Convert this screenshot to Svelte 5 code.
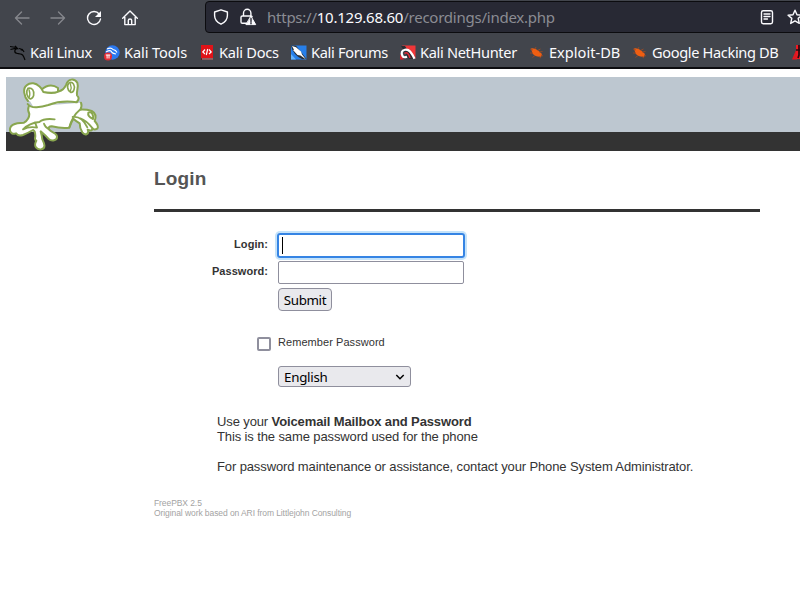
<script>
  const bookmarks = [
    { icon: 'linux', label: 'Kali Linux', w: 94, ls: -0.4 },
    { icon: 'tools', label: 'Kali Tools', w: 95, ls: -0.1 },
    { icon: 'docs', label: 'Kali Docs', w: 92, ls: -0.25 },
    { icon: 'forums', label: 'Kali Forums', w: 109, ls: -0.33 },
    { icon: 'hunter', label: 'Kali NetHunter', w: 129, ls: -0.33 },
    { icon: 'bug', label: 'Exploit-DB', w: 103, ls: 0 },
    { icon: 'bug', label: 'Google Hacking DB', w: 138, ls: -0.36 },
    { icon: 'offsec', label: '', w: 20, ls: 0 },
  ];
</script>

<div class="page">
  <div class="toolbar">
    <div class="nav">
      <svg class="dim" viewBox="0 0 16 16"><path d="M15 8H1.500M7.500 2 1.500 8l6 6" /></svg>
      <svg class="dim" viewBox="0 0 16 16"><path d="M1 8h13.500M8.500 2l6 6-6 6" /></svg>
      <svg viewBox="0 0 16 16"><path d="M13.200 4A6.500 6.500 0 1 0 14.500 9" /><path d="M15 1v6H9z" fill="#fbfbfe" stroke="none" /></svg>
      <svg viewBox="0 0 16 16"><path d="M.7 8.200 8 1l7.300 7.200M2.800 7v7.600h10.400V7M6.300 14v-3.500q0-1.500 1.700-1.500t1.700 1.500V14" /></svg>
    </div>
    <div class="url">
      <svg class="shield" viewBox="0 0 16 16"><path d="M8 .8 14.400 3v3.500c0 4-2.700 7-6.400 8.700C4.300 13.500 1.600 10.500 1.600 6.500V3z" /></svg>
      <svg class="lock" viewBox="0 0 18 18"><path d="M4.500 8V5a3.700 3.700 0 0 1 7.400 0v3M8 15.300H3.300q-1.300 0-1.300-1.300V9.300Q2 8 3.300 8h8.500q1 0 1.300.8" /><path d="m12 8.400 4.700 8.200H7.300z" fill="#fbfbfe" stroke="#fbfbfe" stroke-linejoin="round" stroke-width="1" /><path d="M12 10.500v3M12 14.600v1.200" stroke="#282934" /></svg>
      <span class="addr">https://<b>10.129.68.60</b>/recordings/index.php</span>
      <svg class="reader" viewBox="0 0 16 16"><rect x="2.500" y="1.700" width="11" height="13" rx="1.700" /><path d="M5 5h6M5 7.500h6M5 10h3.500" stroke-width="1.300" /></svg>
      <svg class="star" viewBox="0 0 16 16"><path d="m8 1.200 2 4.500 4.900.5-3.700 3.200 1.100 5L8 11.900l-4.300 2.500 1.100-5L1.100 6.200 6 5.700z" /></svg>
    </div>
  </div>

  <div class="bookmarks">
    {#each bookmarks as b}
      <div class="bm" style="width:{b.w}px;letter-spacing:{b.ls}px">
        <svg viewBox="0 0 16 16">
          {#if b.icon === 'linux'}
            <path d="M0 1.500 6.500 2.500 5 .8M.5 4.500 6.500 3.200M6 3 8.500 4M10.500 4.500 13 5.500 12 4M7.500 3.300C4 4.200 3.800 8 7.500 8.500s5 .5 6.200 3.200q.8 2 1.300 3.300M9 3.500q4 .5 5 3.500" stroke="#050505" stroke-width="1.200" fill="none" />
          {:else if b.icon === 'tools'}
            <circle cx="8.500" cy="7.500" r="7.200" fill="#2b78ef" />
            <path d="M3 4q4-2 6 .5 3 .5 4 3M2 7q5-3 6 .5 1 1 4 1.500" stroke="#fff" stroke-width="1.100" fill="none" />
            <circle cx="4" cy="11.500" r="4" fill="#e52b32" /><path d="M1.800 10h4.500M3.100 10v3.500M5 10v3.500" stroke="#fff" fill="none" />
          {:else if b.icon === 'docs'}
            <path d="M2 0h12v13.500H2z" fill="#e01318" /><path d="M2 13.300h12v1.700H2z" fill="#5d171a" /><path d="M3 14h11" stroke="#ddd" stroke-width=".7" />
            <path d="M6 4.500 3.800 7 6 9M10 4.500 12.200 7 10 9M8.700 4l-1.400 6" stroke="#fff" stroke-width="1.200" fill="none" />
          {:else if b.icon === 'forums'}
            <path d="M0 .5h15.500v14H0z" fill="#277fe9" /><path d="M0 .5 5 .8 15.500 14H11Q2 10 0 .5" fill="#2b3036" />
            <path d="m1 1 4 1.200 5 4.300 1 3 4 5-5.500-4-3-.5L2 5l1-.2z" fill="#fff" /><path d="m0 9 5 5.500H0z" fill="#65b3fb" />
          {:else if b.icon === 'hunter'}
            <path d="M2 .5h13.500v13.200z" fill="#f03638" /><path d="M1 1h4l9 13H9z" fill="#292b30" />
            <path d="m0 9 4 5.500H0z" fill="#d7232c" />
            <path d="M2.500 11Q0 6 5 4.800c4-1 6.500 2.500 9.500 9M2.500 11q1 2 4.500.8" fill="none" stroke="#fff" stroke-width="2.200" /><path d="M4.500 8.500Q8 6 10 13" stroke="#e42a34" stroke-width="1.500" fill="none" />
          {:else if b.icon === 'bug'}
            <path d="M2 3.500Q5 2.800 8.500 5l4.500 4-.8 2.700Q7 12.500 3.500 8.500z" fill="#ee5e12" />
            <path d="m4 5-3-1M4 8 1 8M6 10.500l-2.500 2M6 4l1-2M8.500 5.500l3-1.500M10 7l3.500-.5M10 11.500l2 1.500M12 10l2 1" stroke="#a34a20" stroke-width=".8" fill="none" />
          {:else}
            <path d="M4 0h6v14H4z" fill="#f01822" /><path d="M4 5 0 14.500h5" fill="#e01821" /><path d="M7 0v10l-1 3M4 5h4" stroke="#240c10" stroke-width="1.700" fill="none" />
          {/if}
        </svg>
        <span>{b.label}</span>
      </div>
    {/each}
  </div>

  <div class="banner">
    <svg class="frog" viewBox="0 0 330 270">
      <g fill="#fff" stroke="#89a64f" stroke-width="6" stroke-linecap="round" stroke-linejoin="round">
        <path d="M86 122Q82 132 88 144Q88 160 72 170C40 170 28 180 30 194Q34 207 48 202Q54 212 69 207Q88 199 99 192Q106 195 106 210Q103 221 109 224C99 241 111 252 124 250C139 247 133 232 127 220Q126 209 122 196Q137 209 145 218C155 227 173 224 171 211C169 200 153 200 147 190Q143 181 155 181Q185 188 208 185Q213 170 220 158Q229 166 239 172Q239 187 247 199C256 211 269 203 263 191Q276 198 277 187Q282 193 292 188C298 180 290 172 284 165Q292 144 275 135Q259 130 241 131Q247 120 243 110" />
        <path d="M124 71Q150 49 174 66L174 80H124Z" />
        <path d="M90 106L92 96L230 90V108L190 108L145 119L100 122Z" stroke="none" />
        <path d="M84 105C72 91 67 67 80 58C92 47 108 51 118 61Q126 68 130 78Q157 85 175 77Q193 71 199 55C204 38 223 36 232 50C237 64 228 78 231 88Q241 98 230 108" />
        <path d="M83 114Q91 125 110 124Q127 123 145 117Q185 102 230 109" fill="none" />
        <path d="M69 190Q88 171 118 168Q132 156 164 160M69 190Q89 180 111 185L105 169M132 173Q135 183 147 190M208 184Q217 150 239 132M218 153Q245 149 262 184M241 157Q259 163 278 187" fill="none" stroke-width="5.500" />
        <path d="M265 140C277 135 281 149 279 159C273 156 262 151 265 140Z" />
        <path d="M84 67C96 63 104 76 101 88Q99 97 91 99C81 94 76 78 84 67ZM208 50C219 46 226 59 222 71Q219 80 212 79C202 73 199 58 208 50Z" stroke-width="5" />
        <path d="M87 71Q92 84 87 95M211 53Q216 65 211 76" fill="none" stroke-width="4" />
      </g>
    </svg>
  </div>

  <main>
    <h1>Login</h1>
    <div class="row first"><label for="u">Login:</label><div class="field focus" id="u"><i></i></div></div>
    <div class="row second"><label for="p">Password:</label><div class="field" id="p"></div></div>
    <div class="button">Submit</div>
    <div class="remember"><div class="check"></div><span>Remember Password</span></div>
    <div class="select"><span>English</span><svg viewBox="0 0 10 8"><path d="m1.300 2 3.700 3.700L8.700 2" /></svg></div>
    <div class="help">
      <div>Use your <b>Voicemail Mailbox and Password</b></div>
      <div>This is the same password used for the phone</div>
      <div class="last">For password maintenance or assistance, contact your Phone System Administrator.</div>
    </div>
    <div class="foot"><div>FreePBX 2.5</div><div>Original work based on ARI from Littlejohn Consulting</div></div>
  </main>
</div>

<style>
  :global(body) { margin: 0; background: #fff; overflow: hidden; }
  .page { width: 800px; height: 598px; overflow: hidden; background: #fff; font-family: "Liberation Sans", Arial, sans-serif; color: #333; }
  * { box-sizing: border-box; }
  svg { display: block; flex: none; }
  .toolbar { height: 34px; background: #42454c; display: flex; overflow: hidden; }
  .toolbar svg { width: 16px; height: 16px; fill: none; stroke: #fbfbfe; stroke-width: 1.400; stroke-linejoin: round; stroke-linecap: round; }
  .nav { display: flex; flex: none; width: 205px; padding: 10px 0 0 14px; gap: 20px; }
  .toolbar .dim { stroke: #85878c; }
  .url { flex: none; width: 610px; height: 32px; background: #282934; border: 1px solid #0c0c0f; border-radius: 4px; display: flex; align-items: center; padding-left: 7px; margin-top: 1px; }
  .toolbar .lock { width: 18px; height: 18px; margin-left: 10px; }
  .addr { flex: none; font: 15px/30px "Noto Sans", sans-serif; letter-spacing: -.24px; color: #8b8c93; margin-left: 10px; width: 492px; white-space: nowrap; }
  .addr b { font-weight: 400; color: #fbfbfe; }
  .star { margin-left: 12px; }
  .bookmarks { height: 35px; background: #42454c; border-bottom: 2px solid #0c0c0f; display: flex; padding-left: 10px; overflow: hidden; }
  .bm { flex: none; display: flex; padding-top: 11px; font: 14.600px/16px "Noto Sans", sans-serif; color: #fbfbfe; white-space: nowrap; }
  .bm span { margin-top: -1px; }
  .bm svg { width: 16px; height: 16px; margin-right: 4px; }
  .bm:last-child { margin-left: 22px; }
  .banner { margin: 8px 0 0 6px; height: 74px; background: #bdc7d0; border-bottom: 19px solid #333; position: relative; }
  .frog { position: absolute; left: -6px; top: -11px; width: 110px; height: 90px; }
  main { padding-left: 154px; width: 760px; }
  h1 { margin: 0; height: 61px; border-bottom: 3px solid #333; font-size: 19px; letter-spacing: .15px; line-height: 22px; padding-top: 17px; color: #555; }
  .row { display: flex; }
  .first { margin-top: 21px; height: 28px; }
  label { width: 114px; text-align: right; font-size: 11px; letter-spacing: .05px; font-weight: bold; line-height: 13px; padding-top: 5px; margin-right: 10px; }
  .second label { padding-top: 4px; }
  .field { width: 186px; height: 23px; border: 1px solid #8f8f9d; border-radius: 2px; }
  .focus { width: 188px; height: 25px; margin-left: -1px; border: 2px solid #3584e4; border-radius: 3px; box-shadow: 0 0 0 2px #c5e3fa; padding: 2px 0 0 3px; }
  .focus i { display: block; width: 1px; height: 17px; background: #000; }
  .button { margin: 3px 0 0 124px; width: 54px; height: 23px; border: 1px solid #8f8f9d; border-radius: 4px; background: #e9e9ed; text-align: center; font: 13.333px/22px "Noto Sans", sans-serif; letter-spacing: -.36px; color: #000; }
  .second { height: 24px; }
  .remember { display: flex; margin: 25px 0 0 103px; font-size: 11px; letter-spacing: .06px; line-height: 13px; height: 15px; }
  .check { width: 14px; height: 14px; margin: 1px 7px 0 0; border: 2px solid #8f8f9d; border-radius: 2px; }
  .select { margin: 15px 0 0 124px; width: 133px; height: 21px; border: 1px solid #8f8f9d; border-radius: 3px; background: #e9e9ed; padding: 0 5px; display: flex; align-items: center; justify-content: space-between; font: 13.333px/20px "Noto Sans", sans-serif; letter-spacing: -.25px; color: #000; }
  .select svg { width: 10px; height: 8px; fill: none; stroke: #000; stroke-width: 1.500; }
  .help { margin: 27px 0 0 63px; font-size: 13px; letter-spacing: -.117px; line-height: 15px; white-space: nowrap; }
  .last { margin-top: 15px; }
  .foot { margin-top: 24px; font-size: 8.500px; letter-spacing: -.08px; line-height: 10px; color: #a3a3a3; white-space: nowrap; }
</style>
